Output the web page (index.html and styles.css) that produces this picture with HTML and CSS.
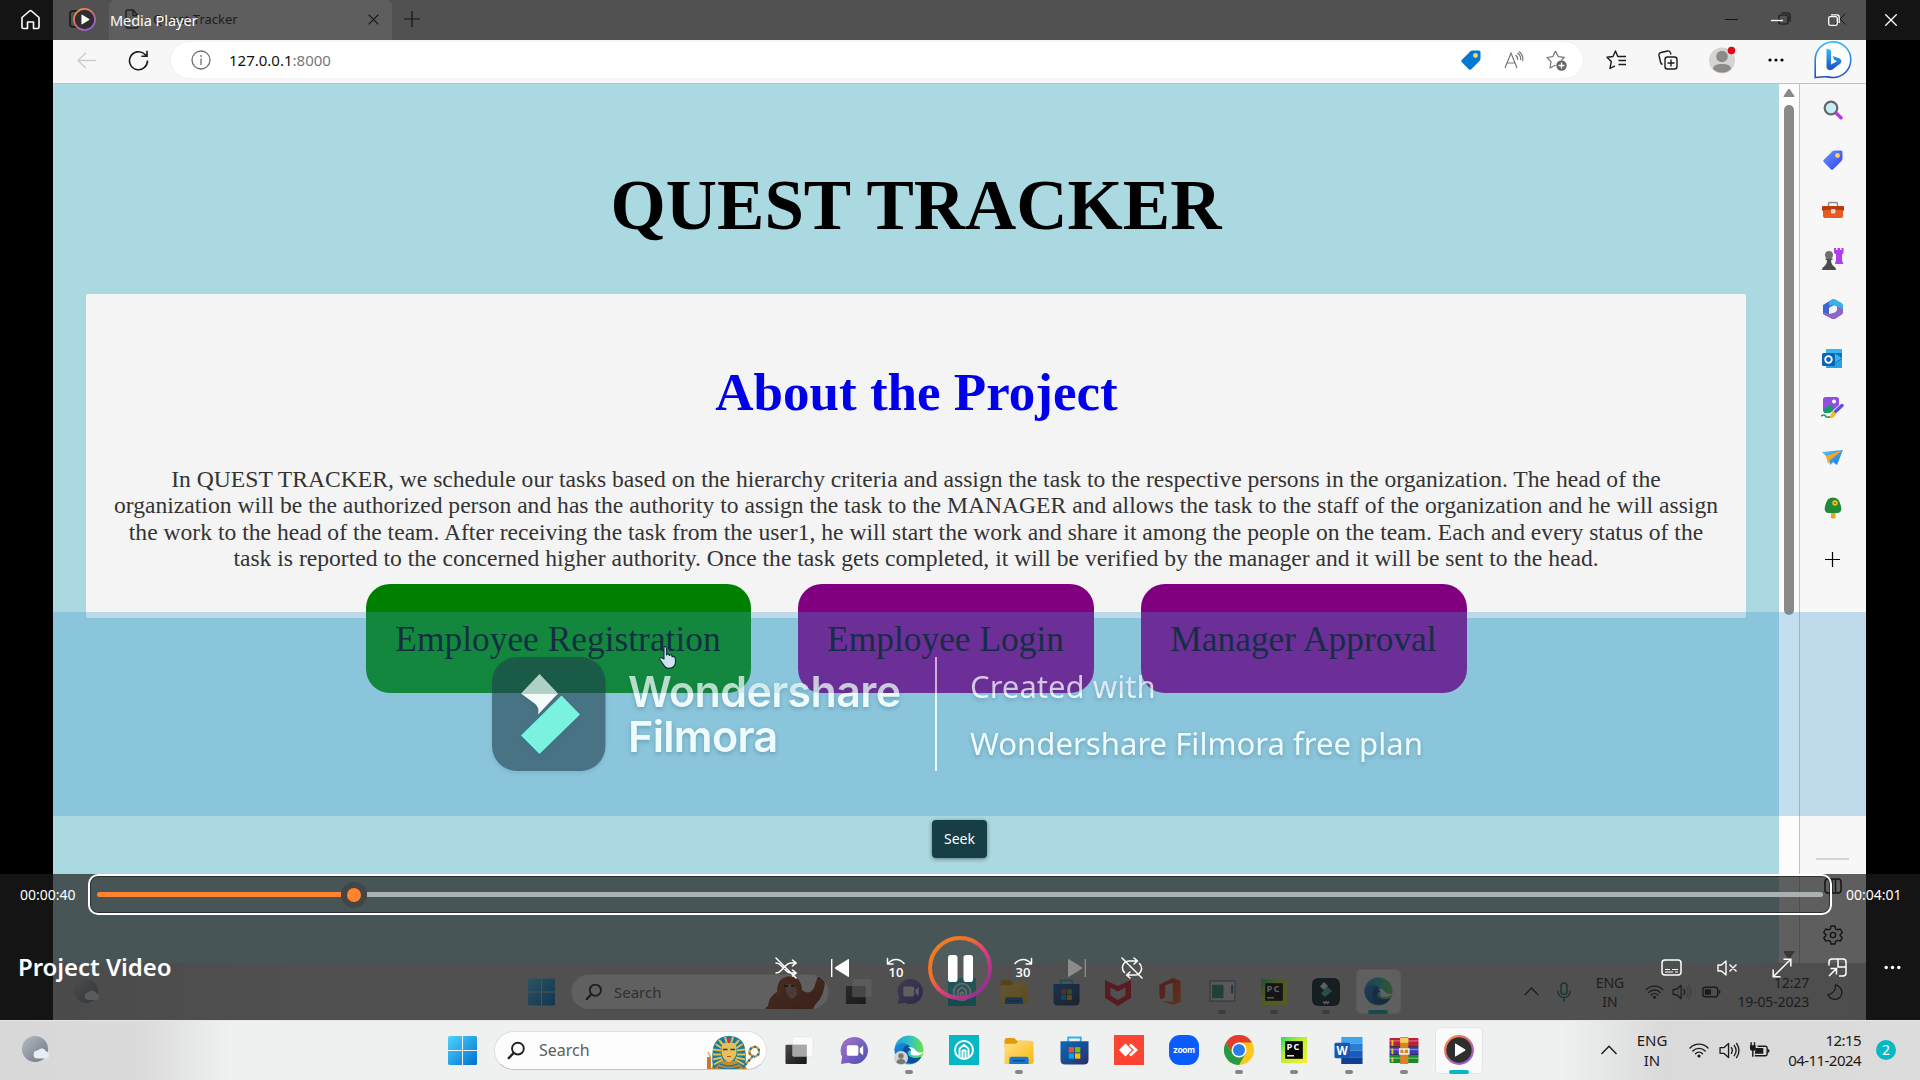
FILE: index.html
```html
<!DOCTYPE html>
<html lang="en">
<head>
<meta charset="utf-8">
<title>Media Player</title>
<link rel="stylesheet" href="styles.css">
</head>
<body>
<svg class="defs" width="0" height="0" aria-hidden="true">
  <defs>
    <linearGradient id="gWin" x1="0" y1="0" x2="1" y2="1"><stop offset="0" stop-color="#4fd4ff"/><stop offset="1" stop-color="#0070d0"/></linearGradient>
    <linearGradient id="gMoon" x1="0" y1="0" x2="1" y2="1"><stop offset="0" stop-color="#b4bcc6"/><stop offset="1" stop-color="#6d747e"/></linearGradient>
    <linearGradient id="gRing" x1="0" y1="0" x2="1" y2="1"><stop offset="0" stop-color="#f58220"/><stop offset=".35" stop-color="#f07028"/><stop offset=".55" stop-color="#d8407c"/><stop offset="1" stop-color="#7a2a98"/></linearGradient>
    <linearGradient id="gMp" x1="0" y1="0" x2=".7" y2="1"><stop offset="0" stop-color="#ff9040"/><stop offset=".5" stop-color="#d86a78"/><stop offset="1" stop-color="#8f5fd8"/></linearGradient>
    <linearGradient id="gChat" x1="0" y1="0" x2="1" y2="1"><stop offset="0" stop-color="#a878c8"/><stop offset="1" stop-color="#4a4cb8"/></linearGradient>
    <linearGradient id="gEdge" x1="0" y1="0" x2="1" y2="0"><stop offset="0" stop-color="#1b9de0"/><stop offset=".5" stop-color="#2fc0c8"/><stop offset="1" stop-color="#6be04c"/></linearGradient>
    <linearGradient id="gEdge2" x1="0" y1="0" x2="1" y2="1"><stop offset="0" stop-color="#1a8fe0"/><stop offset="1" stop-color="#0c4a94"/></linearGradient>
    <linearGradient id="gFold" x1="0" y1="0" x2="1" y2="1"><stop offset="0" stop-color="#ffe08a"/><stop offset="1" stop-color="#fbb90c"/></linearGradient>
    <linearGradient id="gStore" x1="0" y1="0" x2="1" y2="1"><stop offset="0" stop-color="#0a6ab8"/><stop offset="1" stop-color="#2a2f6a"/></linearGradient>
    <linearGradient id="gTv" x1="0" y1="0" x2="1" y2="1"><stop offset="0" stop-color="#4a4a4a"/><stop offset="1" stop-color="#141414"/></linearGradient>
    <linearGradient id="gPc" x1="0" y1="0" x2="1" y2="1"><stop offset="0" stop-color="#1edc6c"/><stop offset=".4" stop-color="#b8ee30"/><stop offset="1" stop-color="#f4f032"/></linearGradient>
    <linearGradient id="gBing" x1="0" y1="0" x2="0" y2="1"><stop offset="0" stop-color="#37bdf0"/><stop offset="1" stop-color="#1b4fc4"/></linearGradient>
    <linearGradient id="gTag" x1="0" y1="0" x2="1" y2="1"><stop offset="0" stop-color="#5c9cff"/><stop offset="1" stop-color="#3b3bee"/></linearGradient>
    <linearGradient id="gPlane" x1="0" y1="0" x2="1" y2="1"><stop offset="0" stop-color="#5cc4f4"/><stop offset="1" stop-color="#1c78d4"/></linearGradient>
    <linearGradient id="gOrang" x1="0" y1="0" x2="1" y2="1"><stop offset="0" stop-color="#b0502a"/><stop offset="1" stop-color="#7c2c14"/></linearGradient>
    <linearGradient id="gOff" x1="0" y1="0" x2="1" y2="1"><stop offset="0" stop-color="#c81e1e"/><stop offset="1" stop-color="#ff6a1c"/></linearGradient>

    <symbol id="win" viewBox="0 0 28 28"><path fill="url(#gWin)" d="M1.500 0H13.500V13.500H0V1.500Q0 0 1.500 0ZM14.500 0H26.500Q28 0 28 1.500V13.500H14.500ZM0 14.500H13.500V28H1.500Q0 28 0 26.500ZM14.500 14.500H28V26.500Q28 28 26.500 28H14.500Z"/></symbol>
    <symbol id="weather" viewBox="0 0 28 28"><circle cx="13" cy="13" r="13" fill="url(#gMoon)"/><path fill="#e8edf3" d="M15.500 22.500a4 4 0 0 1 .2-8 5 5 0 0 1 8.500 1 3.600 3.600 0 0 1 .3 7Z"/></symbol>
    <symbol id="search" viewBox="0 0 20 20"><circle cx="11.500" cy="8" r="6.200" fill="none" stroke="#222" stroke-width="2"/><path d="M7 12.500 1.800 18" stroke="#222" stroke-width="2.400" stroke-linecap="round"/></symbol>
    <symbol id="taskview" viewBox="0 0 30 30"><rect x="1" y="9" width="22" height="20" rx="1" fill="url(#gTv)"/><rect x="8.500" y="1" width="21" height="20" rx="1" fill="#fff" opacity=".7" stroke="#ddd" stroke-width=".6"/><rect x="8.500" y="9" width="14.500" height="12" fill="#a8a8a8"/></symbol>
    <symbol id="chat" viewBox="0 0 30 30"><path fill="url(#gChat)" d="M15 1a14 14 0 1 1-6 26.700L1 29l1.200-7.500A14 14 0 0 1 15 1Z"/><rect x="7" y="9.500" width="12" height="11" rx="2" fill="#fff"/><path fill="#fff" d="m20.500 13 3.500-3v10l-3.500-3Z"/></symbol>
    <symbol id="edge" viewBox="0 0 30 30"><circle cx="15" cy="15" r="14.500" fill="url(#gEdge)"/><path fill="url(#gEdge2)" d="M.5 15C.8 9 8 7 12.500 9c4 1.800 5.500 4.300 4.500 7-1-1-3.500-.4-3.500 2 0 4 6.500 6.500 13.500 4C22 31 3 32.500.5 15Z"/><path fill="#0c4f9c" d="M13 10c-7 4-6 15 3 18.500 5 .5 9-2.500 11-6.500-6 3-13.500 0-13.500-4 0-2 1.500-3.500 3-3 .5-2-1-4-3.500-5Z"/><path fill="#fff" d="M14 12.500c2.500.5 3.700 2.500 2.700 4.500-1 1.800.8 3.600 4.700 3.600 3.500 0 6.500-.8 8-3.600-3 1.200-6 .5-7.500-1.500-2-3-5-4-7.900-3Z"/></symbol>
    <symbol id="user" viewBox="0 0 14 14"><circle cx="7" cy="7" r="7" fill="#d4d4d4"/><circle cx="7" cy="5" r="2.700" fill="#777"/><path fill="#777" d="M2.500 11.500a4.500 3.600 0 0 1 9 0 7 7 0 0 1-9 0Z"/></symbol>
    <symbol id="teal" viewBox="0 0 30 30"><rect width="30" height="30" fill="#06b8c4"/><circle cx="15" cy="15" r="9" fill="none" stroke="#fff" stroke-width="2"/><path fill="none" stroke="#fff" stroke-width="2" d="M10.500 22v-7.500q0-1 1-1.800L15 10l3.500 2.700q1 .8 1 1.800V22M13.500 23v-7q1.500-1.500 3 0v7"/></symbol>
    <symbol id="folder" viewBox="0 0 30 30"><path fill="#e09a0c" d="M0 5q0-3 2.500-3H10l3 3h10v7H0Z"/><path fill="url(#gFold)" d="M0 8h12l3-3h13q2 0 2 2v20q0 2-2 2H0Z"/><path fill="#1478d0" d="M5 29v-5q0-2.500 2.500-2.500h15q2.500 0 2.500 2.500v5Z"/><path d="M9 25.500h12" stroke="#0a4c94" stroke-width="1.500"/></symbol>
    <symbol id="store" viewBox="0 0 30 30"><path fill="none" stroke="#30b4f0" stroke-width="2" d="M8.500 7V2h13v5"/><path fill="url(#gStore)" d="M.5 6h29v19q0 5-5 5h-19q-5 0-5-5Z"/><path fill="#f25022" d="M9 12h5.500v5.500H9Z"/><path fill="#7fba00" d="M15.500 12H21v5.500h-5.500Z"/><path fill="#00a4ef" d="M9 18.500h5.500V24H9Z"/><path fill="#ffb900" d="M15.500 18.500H21V24h-5.500Z"/></symbol>
    <symbol id="anydesk" viewBox="0 0 30 30"><rect width="30" height="30" fill="#fb4434"/><path fill="#fff" d="m11.500 8.500 6.500 6.500-6.500 6.500L5 15Z"/><path fill="none" stroke="#fff" stroke-width="2.800" d="m16 9.500 6 5.500-6 5.500"/></symbol>
    <symbol id="zoomapp" viewBox="0 0 30 30"><rect width="30" height="30" rx="11" fill="#0b5cff"/><text x="15" y="17.800" text-anchor="middle" font-family="Inter, sans-serif" font-weight="700" font-size="8.500" fill="#fff" textLength="22">zoom</text></symbol>
    <symbol id="chrome" viewBox="0 0 30 30"><circle cx="15" cy="15" r="15" fill="#ffc61c"/><path fill="#e33b2e" d="M2 7.500A15 15 0 0 1 28 7.500H15L8.500 18.800Z"/><path fill="#259b45" d="M2 7.500A15 15 0 0 0 15 30l6.500-11.200L8.500 18.800Z"/><circle cx="15" cy="15" r="7.500" fill="#fff"/><circle cx="15" cy="15" r="6" fill="#2b7be9"/></symbol>
    <symbol id="pycharm" viewBox="0 0 28 28"><rect width="28" height="28" fill="url(#gPc)"/><rect x="4.500" y="4.500" width="19" height="19" fill="#050505"/><text x="5.800" y="14" font-family="Open Sans, sans-serif" font-weight="700" font-size="10" fill="#fff" textLength="14">PC</text><path fill="#fff" d="M6.500 19.500h7.500v1.500H6.500Z"/></symbol>
    <symbol id="word" viewBox="0 0 30 30"><path fill="#41a5ee" d="M7 1h22v7H7Z"/><path fill="#2b7cd3" d="M7 8h22v7H7Z"/><path fill="#185abd" d="M7 15h22v7H7Z"/><path fill="#103f91" d="M7 22h22v7H7Z"/><rect y="7" width="16" height="16" rx="1.500" fill="#1657b8"/><text x="8" y="19.300" text-anchor="middle" font-family="Open Sans, sans-serif" font-weight="700" font-size="12" fill="#fff">W</text></symbol>
    <symbol id="winrar" viewBox="0 0 30 28"><rect y="1" width="30" height="9" rx="1" fill="#c01c3c"/><rect y="10" width="30" height="9" fill="#3c3cb0"/><rect y="19" width="30" height="8" rx="1" fill="#168a2c"/><path stroke="#fff" stroke-opacity=".35" stroke-width="1.500" d="M0 4h30M0 13h30M0 22h30"/><path stroke="#222" stroke-width=".8" d="M0 10h30M0 18.500h30"/><path fill="#f0c020" d="M2 3h2v6H2ZM2 12h2v6H2ZM2 21h2v5H2Z"/><rect x="11" width="8.500" height="28" fill="#d88420"/><path fill="#f4d060" d="M11 1h8.500v5H11Z"/><path fill="none" stroke="#eee" stroke-width="1.600" d="M10.500 12.500h9.500v5h-9.500ZM15 12v4"/></symbol>
    <symbol id="mplayer" viewBox="0 0 30 30"><circle cx="15" cy="15" r="13.800" fill="#2e2e2e" stroke="url(#gMp)" stroke-width="2.300"/><path fill="#fff" d="M11.500 8.500 21 14.300q1 .7 0 1.400L11.500 21.500Q11 21.500 11 21V9q0-.7.500-.5Z"/></symbol>
    <symbol id="mcafee" viewBox="0 0 26 28"><path fill="#e01c30" d="M0 2 13 8 26 2V20L13 28 0 20ZM5.500 9.500v8L13 22l7.500-4.500v-8L13 13.500Z"/></symbol>
    <symbol id="office" viewBox="0 0 22 28"><path fill="url(#gOff)" d="M0 7 14 0l8 3v22l-8 3-11-4 11 1V5L6 7.500V20l-4 2q-2 0-2-4Z"/></symbol>
    <symbol id="window" viewBox="0 0 28 24"><rect x="1" y="1" width="26" height="21" fill="#e8e8e8" stroke="#889" stroke-width="1.500"/><path fill="#2e8c84" d="M3 5h12v14H3Z"/><path fill="#2870a0" d="M23 5h2v9h-2Z"/></symbol>
    <symbol id="filmora" viewBox="0 0 28 28"><rect width="28" height="28" rx="6" fill="#0c2430"/><path fill="#fff" d="m12 4 4 4-4 4-4-3.500Z"/><path fill="#40c8b0" d="m15 8.500 5 4.500-7 6-4-3.500Z"/><path fill="none" stroke="#fff" stroke-width="1.300" d="m11 23.500 1.500 2 1.500-2 1.500 2 1.500-2"/></symbol>
    <symbol id="orang" viewBox="0 0 60 33"><path fill="url(#gOrang)" d="M0 33Q1 31 3 30 4 20 12 16 12 5 18 2 26-2 33 3 37 8 37 14 44 20 49 12L53 0 60 3Q60 20 50 29L48 33Z"/><path fill="#b88878" d="M21 9q6-3 9 2 4 4 1 9-4 5-7 1-4-5-3-12Z"/><path d="M19 10h4M26 10h3" stroke="#311" stroke-width="2"/></symbol>
    <symbol id="pharaoh" viewBox="0 0 53 34"><path fill="#c98a2c" d="M4 34 8 25h28l4 9Z"/><path fill="#177ca0" d="M7 34Q4 28 6 13 9 1 22 1T38 13Q40 28 37 34L29 26H15Z"/><path fill="none" stroke="#e8bf48" stroke-width="2" d="M12 5l5 6M8.500 9l6 4M6 14.500l8 1M6 19.500h8M6 24.500l9-2M7 29.500l9-5M32 5l-5 6M35.500 9l-6 4M38 14.500l-8 1M38 19.500h-8M38 24.500l-9-2M37 29.500l-9-5M18 2l1.500 5M26 2l-1.500 5"/><path fill="#e8bf58" d="M14.500 13q0-6 7.500-6t7.500 6v5q-1 7-7.500 9-6.500-2-7.500-9Z"/><path stroke="#15404c" stroke-width="1.600" d="M16 14.500h4.500M23.500 14.500H28"/><path stroke="#a05c20" d="M20 21.500h4"/><path fill="#d33" d="M21 3h2v5h-2Z"/><path fill="none" stroke="#177ca0" stroke-width="1.500" d="M13 29q9 4 18 0M11 32q11 4 22 0"/><path fill="none" stroke="#d89830" stroke-width="2.300" d="M38 30l8-9q-5-2-3-6 2-4 6-3 4 2 3 6-1 3-5 4"/><path fill="none" stroke="#177ca0" stroke-width="2.300" stroke-dasharray="2 3" d="M38 30l8-9q-5-2-3-6 2-4 6-3 4 2 3 6-1 3-5 4"/><path fill="#c87830" d="M0 22h4v12H0Z"/><path fill="none" stroke="#d8a850" stroke-width="1.500" d="M1 17l3 6"/></symbol>

    <symbol id="chev" viewBox="0 0 18 12"><path fill="none" stroke="#1a1a1a" stroke-width="1.400" d="m1.500 10 7.500-7.800 7.500 7.800"/></symbol>
    <symbol id="wifi" viewBox="0 0 20 16"><g fill="none" stroke="#1a1a1a" stroke-width="1.400" stroke-linecap="round"><path d="M1 6a12.500 12.500 0 0 1 18 0M3.800 9a8.700 8.700 0 0 1 12.400 0M6.500 11.700a5 5 0 0 1 7 0"/></g><circle cx="10" cy="14" r="1.600" fill="#1a1a1a"/></symbol>
    <symbol id="spk" viewBox="0 0 22 18"><g fill="none" stroke="#1a1a1a" stroke-width="1.400" stroke-linejoin="round" stroke-linecap="round"><path d="M1 6h4l5-4.500v15L5 12H1ZM13 6q2 3 0 6M16 3.500q4 5.500 0 11M18.500 1.500q5 7.500 0 15"/></g></symbol>
    <symbol id="spklow" viewBox="0 0 22 18"><g fill="none" stroke="#1a1a1a" stroke-width="1.400" stroke-linejoin="round" stroke-linecap="round"><path d="M1 6h4l5-4.500v15L5 12H1ZM13 6q2 3 0 6"/><path opacity=".3" d="M16 3.500q4 5.500 0 11M18.500 1.500q5 7.500 0 15"/></g></symbol>
    <symbol id="batt" viewBox="0 0 20 12"><rect x="1" y="1" width="15.500" height="10" rx="2.500" fill="none" stroke="#1a1a1a" stroke-width="1.500"/><path fill="#1a1a1a" d="M3 3h6.500v6H3ZM17.500 4q2 .3 2 2t-2 2Z"/></symbol>
    <symbol id="plugbatt" viewBox="0 0 22 16"><path fill="none" stroke="#1a1a1a" stroke-width="1.500" d="M9 4h8.500Q19 4 19 6v6q0 2-1.500 2H6M4 8v7"/><path fill="#1a1a1a" d="M7 6h8v6H6ZM19.500 7q2 .3 2 2t-2 2ZM1.500 0v3H1v3q0 3 3 3t3-3V3h-.5V0H5v3H3V0Z"/></symbol>
    <symbol id="mic" viewBox="0 0 14 20"><g fill="none" stroke="#0f7070" stroke-width="1.500" stroke-linecap="round"><rect x="4" y="1" width="6" height="11.500" rx="3"/><path d="M1 9.500a6 6 0 0 0 12 0M7 15.500V19"/></g></symbol>
    <symbol id="crescent" viewBox="0 0 18 18"><path fill="none" stroke="#1a1a1a" stroke-width="1.400" stroke-linejoin="round" d="M10 1.200q1 8.300-8 10.800 3 5 8 4.800 6.500-.8 6.800-7.500Q16.500 3.500 10 1.200Z"/></symbol>
  </defs>
</svg>

<main class="screen">
  <section class="stage">
    <div class="video">
      <div class="tabstrip">
        <span class="tab-actions"><i></i></span>
        <div class="tab">
          <svg width="14" height="20" viewBox="0 0 14 20" fill="none" stroke="#2c2c2c" stroke-width="1.500"><path d="M1 3q0-2 2-2h5l5 5.500V17q0 2-2 2H3q-2 0-2-2ZM8 1v5.500h5"/></svg>
          <span class="tab-title">Quest Tracker</span>
          <svg width="11" height="11" viewBox="0 0 11 11" stroke="#000" stroke-width="1.200"><path d="m.7.700 9.600 9.600m0-9.600L.7 10.300"/></svg>
        </div>
        <span class="newtab"><svg width="16" height="16" viewBox="0 0 16 16" stroke="#000" stroke-width="1.200"><path d="M8 0v16M0 8h16"/></svg></span>
        <span class="wc wc-min"><svg width="13" height="12" viewBox="0 0 13 12" stroke="#000"><path d="M0 6.500h13"/></svg></span>
        <span class="wc wc-max"><svg width="13" height="13" viewBox="0 0 13 13" fill="none" stroke="#000" stroke-width="1.200"><rect x="1" y="3" width="9" height="9" rx="1.500"/><path d="M3.500 1h6.500q2 0 2 2v6.500"/></svg></span>
        <span class="wc wc-close"><svg width="12" height="12" viewBox="0 0 12 12" stroke="#000"><path d="m.5.500 11 11m0-11-11 11"/></svg></span>
      </div>

      <div class="toolbar">
        <span class="t-back"><svg width="19" height="17" viewBox="0 0 19 17" fill="none" stroke="#ccc" stroke-width="1.300"><path d="M19 8.500H1M9 .7 1 8.500l8 7.800"/></svg></span>
        <span class="t-reload"><svg width="21" height="21" viewBox="0 0 21 21" fill="none" stroke="#1b1b1b" stroke-width="1.600"><path d="M19.500 10.500A9 9 0 1 1 16.500 4l2 1.800M19 .8v5.400h-5.600"/></svg></span>
        <div class="address">
          <span class="a-info"><svg width="20" height="20" viewBox="0 0 20 20" fill="none" stroke="#707070" stroke-width="1.300"><circle cx="10" cy="10" r="9"/><path d="M10 8.500V15M10 5v2"/></svg></span>
          <span class="url"><b>127.0.0.1</b>:8000</span>
          <span class="a-tag"><svg width="20" height="20" viewBox="0 0 20 20"><path fill="#0078d4" d="M9.500 1.200 11 .5h7q1.500 0 1.500 1.500v7l-1 2-8.500 8.500q-1 .7-2 0L.7 12q-.8-1 0-2Z"/><circle cx="14.500" cy="5.500" r="2.400" fill="#fcd35a"/></svg></span>
          <span class="a-read"><svg width="20" height="18" viewBox="0 0 20 18" fill="none" stroke="#767676" stroke-width="1.200"><path d="M1 17 7 2l6 15M3 12h8M11.500 4q2.500 2 2 5M13.500 2q4 3 3 7M15 .5q5 4 3.500 9.500"/></svg></span>
          <span class="a-star"><svg width="21" height="21" viewBox="0 0 21 21"><path fill="none" stroke="#767676" stroke-width="1.200" stroke-linejoin="round" d="m9.500 1 2.700 5.600 6.200.8L15.500 10M9.500 15l-5.500 3 1-6.300L1 7.500l5.900-.9L9.500 1"/><circle cx="15.500" cy="15.500" r="5.200" fill="#666"/><path stroke="#fff" stroke-width="1.300" d="M15.500 12.500v6m-3-3h6"/></svg></span>
        </div>
        <span class="t-fav"><svg width="20" height="20" viewBox="0 0 20 20" fill="none" stroke="#1b1b1b" stroke-width="1.400" stroke-linejoin="round"><path d="M13 6.500h-1.200L9.500 1 7 6.500 1 7.200l4.300 4.300L4 18.500l5-2.700M12.500 6.500H20M12.500 10.500H20M12.500 14.500H20"/></svg></span>
        <span class="t-coll"><svg width="20" height="20" viewBox="0 0 20 20" fill="none" stroke="#1b1b1b" stroke-width="1.400"><rect x="7" y="7" width="12" height="12" rx="2.500"/><path d="M13 9.500v7M9.500 13h7M4.500 14.500Q3 14 2.500 12L1 5.500Q.5 3 3 2.500L9.500 1q2.500-.5 3 2l.5 1.500"/></svg></span>
        <span class="t-user"><svg width="28" height="28" viewBox="0 0 28 28"><circle cx="14" cy="14.500" r="13" fill="#d4d4d4"/><circle cx="14" cy="10.500" r="5.800" fill="#8e8a88"/><path fill="#8e8a88" d="M5 23q0-5 9-5t9 5a13 13 0 0 1-18 0Z"/><circle cx="23.500" cy="4.500" r="3.800" fill="#dd0a14"/></svg></span>
        <span class="t-more"><svg width="16" height="4" viewBox="0 0 16 4"><circle cx="2" cy="2" r="1.600"/><circle cx="8" cy="2" r="1.600"/><circle cx="14" cy="2" r="1.600"/></svg></span>
        <span class="t-bing"><svg width="38" height="38" viewBox="0 0 38 38"><path fill="#fff" stroke="url(#gBing)" stroke-width="1.600" d="M1.200 36.500V19a17.800 17.800 0 1 1 17.800 17.500q-2 0-5-.6-4-.4-12.800.6Z"/><path fill="url(#gBing)" d="m12.500 7.500 4.500 1.700v14.300l6-3.200-2.800-1.500-1.600-3.800 6.900 2.300q2.800 1.800 1.200 5L18.500 28.500q-4.500 2-6-2Z"/></svg></span>
      </div>

      <div class="browser">
        <div class="page">
          <h1>QUEST TRACKER</h1>
          <div class="card">
            <h2>About the Project</h2>
            <p>In QUEST TRACKER, we schedule our tasks based on the hierarchy criteria and assign the task to the respective persons in the organization. The head of the<br>organization will be the authorized person and has the authority to assign the task to the MANAGER and allows the task to the staff of the organization and he will assign<br>the work to the head of the team. After receiving the task from the user1, he will start the work and share it among the people on the team. Each and every status of the<br>task is reported to the concerned higher authority. Once the task gets completed, it will be verified by the manager and it will be sent to the head.</p>
          </div>
          <nav class="actions">
            <a class="btn btn-reg">Employee Registration</a>
            <a class="btn btn-login">Employee Login</a>
            <a class="btn btn-appr">Manager Approval</a>
          </nav>
        </div>
        <div class="scroll">
          <svg width="12" height="10" viewBox="0 0 12 10"><path fill="#888" d="M1 9Q0 9 1 7.500L5 1.500q1-1.500 2 0l4 6Q12 9 11 9Z"/></svg>
          <i class="thumb"></i>
          <svg class="down" width="12" height="10" viewBox="0 0 12 10"><path fill="#777" d="M1 1h10q1 0 0 1.500L7 8.500q-1 1.500-2 0l-4-6Q0 1 1 1Z"/></svg>
        </div>
        <aside class="side">
          <svg width="20" height="20" viewBox="0 0 20 20"><circle cx="8" cy="8" r="6.300" fill="#c6ecfa" stroke="#666" stroke-width="2.200"/><path d="m13.500 13.500 4.500 4.300" stroke="#bb35e8" stroke-width="3.400" stroke-linecap="round"/></svg>
          <svg width="20" height="20" viewBox="0 0 20 20"><path fill="url(#gTag)" d="M9.500 1.200 11 .5h7q1.500 0 1.500 1.500v7l-1 2-8.500 8.500q-1 .7-2 0L.7 12q-.8-1 0-2Z"/><circle cx="14.500" cy="5.500" r="2.400" fill="#fcd35a"/></svg>
          <svg width="22" height="18" viewBox="0 0 22 18"><path fill="none" stroke="#8a9094" stroke-width="1.500" d="M6.500 6V3q0-1.500 1.500-1.500h6q1.500 0 1.500 1.500v3"/><rect y="5" width="22" height="5" rx="1" fill="#b83c10"/><path fill="#e85a20" d="M1 9h20v6q0 2-2 2H3q-2 0-2-2Z"/><rect x="9" y="8" width="4.500" height="4.500" rx="1" fill="#dcdcdc"/></svg>
          <svg width="22" height="22" viewBox="0 0 22 22"><path fill="#b13cf0" d="M12 0h2v2h1.500V0h2.500v2h1.500V0h2v5l-1.500 1.500v6l1.500 3.500H13l1-4V6.500L12 5Z"/><circle cx="7" cy="7" r="4" fill="#707070"/><path fill="#4c4c4c" d="M3.500 10.500h7V12H9q0 4 3 6.500 2 .5 2 3.500H0q0-3 2-3.500Q5 16 5 12H3.500Z"/></svg>
          <svg width="20" height="20" viewBox="0 0 20 20"><path fill="#3f66d0" d="M10 0 0 6v9l6 3V9l5-3 9 4V6.500Z"/><path fill="#38b0e8" d="m9 .5 3-.2 7 4q1 1 1 3V11l-6-3.500L10 5.500 6 7V3Z"/><path fill="#8e66c8" d="M20 10v4l-1 1.500L12 20h-3L1 15.500 0 13l6 2 4-1 4-2.500V7Z"/><circle cx="10" cy="10.500" r="3.300" fill="#f4f4ff"/></svg>
          <svg width="21" height="20" viewBox="0 0 21 20"><rect x="4" width="16" height="19" rx="1" fill="#35b5ec"/><path fill="#146cbc" d="M12 4h8v15H4l16-10Z"/><path fill="#28a0e8" d="m4 19 16-9v9Z"/><rect y="4" width="13" height="13" rx="1.500" fill="#0a64b4"/><circle cx="6.500" cy="10.500" r="3.300" fill="none" stroke="#fff" stroke-width="1.800"/></svg>
          <svg width="23" height="22" viewBox="0 0 23 22"><rect x="2" width="16" height="15" rx="2.500" fill="#8f50e0"/><circle cx="13" cy="4.500" r="2" fill="#fff"/><path fill="#1b9a68" d="m2 13 6-5 6 4-4 4H3Z"/><path stroke="#f7f7f7" stroke-width="5.500" d="m11 18 11-10"/><path stroke="#5a50e4" stroke-width="3.400" stroke-linecap="round" d="m13.500 15.500 7.500-7"/><path fill="#f8b820" d="m12 13.500 3 3q-1 5-7 4.500Z"/><path fill="none" stroke="#1b9a68" stroke-width="1.600" d="M0 19q3-2 4.500 0t4.500.7"/></svg>
          <svg width="21" height="16" viewBox="0 0 21 16"><path fill="url(#gPlane)" d="M0 2 21 0l-6 15-4-3-3 3-1-6Z"/><path fill="#f5a623" d="M21 0 4 6l2 8 2-4Z"/></svg>
          <svg width="18" height="22" viewBox="0 0 18 22"><rect x="7" y="13" width="4.500" height="8.500" rx="1" fill="#f0a41c"/><path fill="#1f8a38" d="M9 .5q6 0 7.500 7Q19 15 14 16H4q-5-1-2.500-8.500Q3 .5 9 .5Z"/><circle cx="11" cy="6" r="2.700" fill="#f8c11c"/><circle cx="11" cy="6" r="1" fill="#c04410"/></svg>
          <svg class="side-add" width="15" height="15" viewBox="0 0 15 15" stroke="#000" stroke-width="1.200"><path d="M7.500 0v15M0 7.500h15"/></svg>
          <i class="side-rule"></i>
          <svg class="side-panel" width="18" height="16" viewBox="0 0 18 16" fill="none" stroke="#000" stroke-width="1.500"><rect x="1" y="1" width="16" height="14" rx="3"/><path d="M8 1v14M11.500 1v14"/></svg>
          <svg class="side-gear" width="20" height="20" viewBox="0 0 20 20" fill="none" stroke="#000" stroke-width="1.400" stroke-linejoin="round"><path d="M8 1h4l.6 2.800 2 1.100L17.300 4l2 3.500L17.200 9.500v1.200l2.100 2-2 3.400-2.700-.8-2 1.100L12 19H8l-.6-2.600-2-1.100-2.700.8-2-3.400 2.100-2V9.500L.7 7.500l2-3.500 2.700.9 2-1.100Z"/><circle cx="10" cy="10" r="2.600"/></svg>
        </aside>
      </div>

      <div class="inner-taskbar">
        <span class="weather"><svg width="26" height="26"><use href="#weather"/></svg></span>
        <span class="start"><svg width="27" height="28"><use href="#win"/></svg></span>
        <div class="pill"><svg class="mag" width="18" height="18"><use href="#search"/></svg><span>Search</span><svg class="art" width="60" height="33"><use href="#orang"/></svg></div>
        <div class="apps">
          <span><svg width="27" height="27"><use href="#taskview"/></svg></span>
          <span><svg width="27" height="27"><use href="#chat"/></svg></span>
          <span><svg width="28" height="28"><use href="#teal"/></svg></span>
          <span><svg width="28" height="27"><use href="#folder"/></svg></span>
          <span><svg width="27" height="28"><use href="#store"/></svg></span>
          <span><svg width="26" height="28"><use href="#mcafee"/></svg></span>
          <span><svg width="22" height="27"><use href="#office"/></svg></span>
          <span class="run"><svg width="27" height="23"><use href="#window"/></svg></span>
          <span class="run"><svg width="26" height="26"><use href="#pycharm"/></svg></span>
          <span class="run"><svg width="28" height="28"><use href="#filmora"/></svg></span>
          <span class="active"><svg width="29" height="29"><use href="#edge"/></svg></span>
        </div>
        <div class="tray">
          <span class="v-chev"><svg width="17" height="11"><use href="#chev"/></svg></span>
          <span class="v-mic"><svg width="14" height="20"><use href="#mic"/></svg></span>
          <span class="v-lang">ENG<br>IN</span>
          <span class="v-wifi"><svg width="19" height="15"><use href="#wifi"/></svg></span>
          <span class="v-spk"><svg width="20" height="16"><use href="#spklow"/></svg></span>
          <span class="v-batt"><svg width="19" height="12"><use href="#batt"/></svg></span>
          <span class="v-clock">12:27<br>19-05-2023</span>
          <span class="v-focus"><svg width="17" height="18"><use href="#crescent"/></svg></span>
        </div>
      </div>

      <div class="band"></div>
      <svg class="hand" width="18" height="23" viewBox="0 0 18 23"><path fill="#cfe2ee" stroke="#0d2c3c" stroke-width="1.100" stroke-linejoin="round" d="M5 13V2.200Q5-.2 6.500.8q1 .3 1 1.500V9q.5-2 2.500-.5l.3 1q1.500-1.500 2.700.3v1q2-1 3 .8 1.500 5.500-1 8.500-1.500 2.300-5 2.300T5.500 20L.8 13.500Q.5 11 3 12Z"/></svg>
      <div class="watermark">
        <svg class="wm-logo" width="114" height="116" viewBox="0 0 114 116"><rect y="1" width="113.500" height="114" rx="25" fill="#1f3f4f" fill-opacity=".57"/><path fill="#e8fff4" fill-opacity=".72" d="M47.500 18 66 37.500H29Z"/><path fill="#fafffd" fill-opacity=".97" d="M29 37.500H66L46 58.500Q48 51 42 47Z"/><path fill="#7af2e0" d="M69.500 39.500 88 58.500 47.500 98 29 79.500Z"/></svg>
        <div class="wm-name"><span class="top">Wondershare</span><span>Filmora</span></div>
        <i class="wm-rule"></i>
        <div class="wm-plan"><span class="top">Created with</span><span>Wondershare Filmora free plan</span></div>
      </div>
    </div>

    <div class="player">
      <header class="p-title">
        <span class="p-home"><svg width="21" height="21" viewBox="0 0 21 21" fill="none" stroke="#fff" stroke-width="1.600" stroke-linejoin="round"><path d="M2 8.500 9.500 2q1-.9 2 0L19 8.500V18q0 1.500-1.500 1.500h-4V13H7.500v6.500h-4Q2 19.500 2 18Z"/></svg></span>
        <span class="p-app"><svg width="23" height="23"><use href="#mplayer"/></svg></span>
        <span class="p-name">Media Player</span>
        <span class="p-win"><svg width="12" height="12" viewBox="0 0 12 12" stroke="#fff" stroke-width="1.300"><path d="M0 6.500h12"/></svg></span>
        <span class="p-win"><svg width="12" height="12" viewBox="0 0 12 12" fill="none" stroke="#fff" stroke-width="1.300"><rect x=".7" y="2.700" width="8.600" height="8.600" rx="1.500"/><path d="M3 .8h6q2.200 0 2.200 2.200v6"/></svg></span>
        <span class="p-win"><svg width="12" height="12" viewBox="0 0 12 12" stroke="#fff" stroke-width="1.300"><path d="m.3.300 11.400 11.400m0-11.400L.3 11.700"/></svg></span>
      </header>
      <span class="tip">Seek</span>
      <footer class="p-bar">
        <div class="p-seek">
          <span class="time t-now">00:00:40</span>
          <div class="slider"><i class="fill"></i><i class="knob"></i><i class="rest"></i></div>
          <span class="time t-end">00:04:01</span>
        </div>
        <div class="p-ctl">
          <span class="p-media">Project Video</span>
          <div class="mid">
            <span><svg width="22" height="22" viewBox="0 0 22 22" fill="none" stroke="#fff" stroke-width="1.500" stroke-linecap="round"><path d="M1 6q3 0 5 2.500l5 5q2 2.500 5 2.500h4M1 16q3 0 5-2.500L11 8.500Q13 6 16 6h4M17.500 3 21 6l-3.500 3M17.500 13l3.500 3-3.500 3M1 1l20 20"/></svg></span>
            <span><svg width="20" height="20" viewBox="0 0 20 20" fill="#fff"><path d="M1 1h1.400v18H1ZM18 1.300q1-.6 1 .7v16q0 1.300-1 .7L5.500 11q-1-1 0-2Z"/></svg></span>
            <span class="jump"><svg width="20" height="9" viewBox="0 0 20 9"><path fill="none" stroke="#fff" stroke-width="1.500" stroke-linecap="round" stroke-linejoin="round" d="M1.500 1.500v5.500H7M2 6.500Q5.500 2.500 10 2.500t8 4"/></svg><b>10</b></span>
            <span><svg width="64" height="68" viewBox="0 0 64 68"><circle cx="32" cy="34" r="30" fill="#fff" fill-opacity=".05" stroke="url(#gRing)" stroke-width="4"/><rect x="20" y="21" width="9.500" height="27" rx="2.800" fill="#fff"/><rect x="35.500" y="21" width="9.500" height="27" rx="2.800" fill="#fff"/></svg></span>
            <span class="jump"><svg width="20" height="9" viewBox="0 0 20 9"><path fill="none" stroke="#fff" stroke-width="1.500" stroke-linecap="round" stroke-linejoin="round" d="M18.500 1.500v5.500H13M18 6.500q-3.500-4-8-4t-8 4"/></svg><b>30</b></span>
            <span><svg width="20" height="20" viewBox="0 0 20 20" fill="#8c8c8c"><path d="M17.600 1H19v18h-1.400ZM2 1.300q-1-.6-1 .7v16q0 1.300 1 .7L14.500 11q1-1 0-2Z"/></svg></span>
            <span><svg width="22" height="22" viewBox="0 0 22 22" fill="none" stroke="#fff" stroke-width="1.500" stroke-linecap="round" stroke-linejoin="round"><path d="M3.500 15.500Q1 13 1.500 9.500 3 4 8 4h7M13 1l3.500 3L13 7M18.500 6.500q2.500 2.500 2 6Q19 18 14 18H7M9 21l-3.500-3L9 15M1 1l20 20"/></svg></span>
          </div>
          <div class="right">
            <span><svg width="21" height="17" viewBox="0 0 21 17" fill="none" stroke="#fff" stroke-width="1.500"><rect x="1" y="1" width="19" height="15" rx="3"/><path d="M4 10.500h5M11 10.500h6M4 13h8M14 13h3" stroke-width="1.200"/></svg></span>
            <span><svg width="20" height="16" viewBox="0 0 20 16" fill="none" stroke="#fff" stroke-width="1.400" stroke-linejoin="round"><path d="M1 5h3.500L9 1v14l-4.500-4H1ZM12.500 4.500l7 7m0-7-7 7"/></svg></span>
            <span><svg width="20" height="20" viewBox="0 0 20 20" fill="none" stroke="#fff" stroke-width="1.500"><path d="M1.500 18.500 18.500 1.500M11.500 1.200h7.300v7.300M1.200 11.500v7.300h7.300"/></svg></span>
            <span><svg width="19" height="19" viewBox="0 0 19 19" fill="none" stroke="#fff" stroke-width="1.500"><path d="M1 7.500V4q0-3 3-3h11q3 0 3 3v11q0 3-3 3h-4M10 1v8h8M1 18l7-7M2.500 10.500h6v6"/></svg></span>
            <span><svg width="17" height="5" viewBox="0 0 17 5" fill="#fff"><circle cx="2.200" cy="2.500" r="1.700"/><circle cx="8.500" cy="2.500" r="1.700"/><circle cx="14.800" cy="2.500" r="1.700"/></svg></span>
          </div>
        </div>
      </footer>
    </div>
  </section>

  <section class="taskbar">
    <span class="weather"><svg width="28" height="28"><use href="#weather"/></svg></span>
    <span class="start"><svg width="29" height="29"><use href="#win"/></svg></span>
    <div class="pill"><svg class="mag" width="19" height="19"><use href="#search"/></svg><span>Search</span><svg class="art" width="53" height="34"><use href="#pharaoh"/></svg></div>
    <div class="apps">
      <span><svg width="30" height="29"><use href="#taskview"/></svg></span>
      <span><svg width="29" height="29"><use href="#chat"/></svg></span>
      <span class="run"><svg width="30" height="30"><use href="#edge"/></svg><svg class="who" width="14" height="14"><use href="#user"/></svg></span>
      <span><svg width="30" height="30"><use href="#teal"/></svg></span>
      <span class="run"><svg width="30" height="29"><use href="#folder"/></svg></span>
      <span><svg width="29" height="30"><use href="#store"/></svg></span>
      <span><svg width="30" height="30"><use href="#anydesk"/></svg></span>
      <span><svg width="30" height="30"><use href="#zoomapp"/></svg></span>
      <span class="run"><svg width="30" height="30"><use href="#chrome"/></svg></span>
      <span class="run"><svg width="26" height="26"><use href="#pycharm"/></svg></span>
      <span class="run"><svg width="30" height="29"><use href="#word"/></svg></span>
      <span class="run"><svg width="30" height="27"><use href="#winrar"/></svg></span>
      <span class="active"><svg width="30" height="30"><use href="#mplayer"/></svg></span>
    </div>
    <div class="tray">
      <span class="s-chev"><svg width="18" height="12"><use href="#chev"/></svg></span>
      <span class="s-lang">ENG<br>IN</span>
      <span class="s-ic"><svg width="20" height="16"><use href="#wifi"/></svg></span>
      <span class="s-ic"><svg width="21" height="17"><use href="#spk"/></svg></span>
      <span class="s-ic"><svg width="21" height="16"><use href="#plugbatt"/></svg></span>
      <span class="s-clock">12:15<br>04-11-2024</span>
      <span class="s-badge"><b>2</b></span>
    </div>
  </section>
</main>
</body>
</html>
```

FILE: styles.css
```css
* { box-sizing: border-box; }
html, body { margin: 0; height: 100%; background: #000; }
body { font-family: "Noto Sans", "Open Sans", sans-serif; overflow: hidden; }
.defs { position: absolute; }
svg { display: block; flex: none; }
i { display: block; }

.screen { display: grid; grid-template-rows: 1020px 60px; width: 1920px; height: 1080px; }
.stage { display: grid; grid-template: 1020px / 1920px; }
.video, .player { grid-area: 1 / 1; }
.video { position: relative; width: 1813px; margin-left: 53px; display: grid; grid-template-rows: 40px 44px 879px 57px; background: #f7f7f7; }

/* browser tab strip */
.tabstrip { display: flex; background: #cbcbcb; }
.tabstrip > span { display: flex; align-items: center; justify-content: center; padding-bottom: 3px; }
.tab-actions { width: 56px; }
.tab-actions i { width: 16px; height: 18px; border: 2px solid #333; border-radius: 4px; margin-left: -8px; }
.tab { width: 283px; background: #f7f7f7; border-radius: 6px 6px 0 0; display: flex; align-items: center; padding: 0 13px 2px 16px; }
.tab svg:last-child { margin-left: auto; }
.tab-title { font-size: 13px; color: #222; margin-left: 14px; }
.newtab { width: 40px; }
.wc-min { width: 46px; margin-left: auto; }
.wc-max { width: 60px; }
.wc-close { width: 52px; }

/* browser toolbar */
.toolbar { display: flex; align-items: center; background: #f7f7f7; border-bottom: 1px solid #b9c4c6; padding-bottom: 3px; }
.toolbar > span, .address > span { display: flex; align-items: center; justify-content: center; flex: none; }
.t-back { width: 66px; }
.t-reload { width: 38px; }
.address { width: 1412px; height: 36px; margin: 0 0 0 14px; border-radius: 18px; background: #fff; display: flex; align-items: center; box-shadow: 0 0 2px #e2e2e2; }
.a-info { width: 60px; }
.address .url { font-size: 15px; color: #777; margin: 0 auto 0 -2px; }
.url b { font-weight: 400; color: #111; }
.a-tag { width: 56px; }
.a-read { width: 30px; }
.a-star { width: 54px; }
.t-fav { width: 66px; }
.t-coll { width: 38px; }
.t-user { width: 70px; }
.t-more { width: 38px; }
.t-bing { width: 71px; padding-left: 5px; }

/* web page */
.browser { display: grid; grid-template-columns: 1726px 20px 67px; min-height: 0; }
.page { background: #abd9e1; font-family: "Liberation Serif", serif; text-align: center; padding: 81px 33px 0; }
.page h1 { margin: 0; font-size: 71px; line-height: 80px; font-weight: 700; color: #000; }
.card { margin-top: 49px; height: 324px; background: #f4f4f4; border-radius: 2px; padding-top: 68px; }
.card h2 { margin: 0 0 44px; padding-left: 1px; font-size: 53px; line-height: 60px; color: #0000ea; white-space: nowrap; }
.card p { margin: 0; font-size: 23.600px; line-height: 26.400px; color: #333; display: grid; justify-content: center; white-space: nowrap; }
.actions { display: flex; justify-content: center; gap: 47px; margin-top: -34px; position: relative; }
.btn { height: 109px; border-radius: 24px; font-size: 35.400px; line-height: 110px; color: #02020a; white-space: nowrap; background: #800080; }
.btn-reg { width: 385px; background: #008000; }
.btn-login { width: 296px; }
.btn-appr { width: 326px; }

.scroll { background: #fcfcfc; display: flex; flex-direction: column; align-items: center; padding-top: 4px; }
.thumb { width: 10px; height: 510px; border-radius: 5px; background: #898989; margin-top: 7px; }
.scroll .down { margin: auto 0 3px; }
.side { background: #f7f7f7; border-left: 1px solid #c2c2c2; padding-right: 1px; display: grid; grid-template-rows: 51px repeat(7, 49.700px) 50px 54px 0 1fr 51px 52px; justify-items: center; align-items: center; }
.side-rule { width: 33px; height: 2px; background: #d4d4d4; grid-row: 12; align-self: end; }
.side-panel { grid-row: 13; }
.side-gear { grid-row: 14; align-self: start; margin-top: 14px; }

/* shared taskbar parts */
.inner-taskbar, .taskbar { display: flex; align-items: center; }
.inner-taskbar > span, .taskbar > span, .apps > span, .tray > span { display: flex; align-items: center; justify-content: center; flex: none; }
.pill { display: flex; align-items: center; background: #fdfdfd; border: 1px solid #e0e0e0; border-bottom-color: #c4c4c4; overflow: hidden; color: #5c5c5c; }
.pill .art { margin-left: auto; align-self: end; }
.apps { display: flex; height: 100%; }
.apps > span { position: relative; height: 100%; }
.run::after, .active::after { content: ""; position: absolute; bottom: 6px; width: 8px; height: 4px; border-radius: 2px; background: #868686; }
.active::after { width: 20px; background: #06b8c4; }
.active::before { content: ""; position: absolute; inset: 6px 3.500px; border-radius: 5px; background: #fafafa; border: 1px solid #e4e4e4; }
.active svg { position: relative; }
.tray { display: flex; margin-left: auto; height: 100%; }
.tray span { text-align: center; }

/* taskbar inside the recording */
.inner-taskbar { background: linear-gradient(90deg, #b8b8b8, #cacaca 15%, #cacaca 85%, #c0c0c0); padding-right: 7px; }
.inner-taskbar .weather { width: 68px; }
.inner-taskbar .start { width: 50px; margin-left: 395px; }
.inner-taskbar .pill { width: 258px; height: 36px; border-radius: 18px; margin-left: 5px; font-size: 15px; padding: 0 3px 0 13px; }
.inner-taskbar .pill span { margin-left: 11px; }
.inner-taskbar .apps { margin-left: 3px; }
.inner-taskbar .apps > span { width: 52px; }
.inner-taskbar .tray { font-size: 14px; line-height: 19px; color: #222; }
.v-chev { width: 34px; }
.v-mic { width: 32px; }
.v-lang { width: 60px; }
.v-wifi, .v-spk { width: 28px; }
.v-batt { width: 30px; }
.tray .v-clock { width: 83px; justify-content: flex-end; text-align: right; letter-spacing: -.150px; }
.v-focus { width: 50px; }

/* highlight band and watermark over the recording */
.band { position: absolute; left: 0; right: 0; top: 612px; height: 204px; background: rgba(64, 152, 206, .3); }
.hand { position: absolute; left: 606px; top: 646px; }
.watermark { position: absolute; left: 439px; top: 656px; display: flex; align-items: flex-start; height: 116px; color: rgba(242, 255, 255, .96); white-space: nowrap; }
.wm-logo { filter: drop-shadow(0 2px 2px rgba(30, 60, 80, .2)); }
.wm-name, .wm-plan { display: flex; flex-direction: column; align-items: flex-start; filter: drop-shadow(0 2px 2px rgba(30, 70, 100, .3)); }
.wm-name { width: 307px; margin-left: 22px; padding-top: 13px; font: 600 43px/45px Inter, sans-serif; letter-spacing: -.650px; }
/* the watermark is fainter where it crosses the dark buttons */
.wm-name .top, .wm-plan .top { color: transparent; -webkit-background-clip: text; background-clip: text; }
.wm-name .top { background-image: linear-gradient(rgba(240, 255, 250, .74) 24px, rgba(242, 255, 255, .96) 24px); }
.wm-plan .top { background-image: linear-gradient(rgba(250, 246, 255, .76) 35px, rgba(242, 255, 255, .92) 35px); }
.wm-rule { width: 2px; height: 114px; margin-top: 1px; background: linear-gradient(rgba(255, 240, 255, .65) 36px, rgba(240, 255, 255, .9) 36px); }
.wm-plan { margin-left: 33px; padding-top: 2px; font-size: 31.100px; line-height: 57px; }

/* player chrome */
.player { position: relative; display: flex; flex-direction: column; color: #fff; }
.p-title { height: 40px; background: rgba(29, 29, 29, .7); display: flex; align-items: center; padding: 0 1px 1px 0; }
.p-title > span { display: flex; align-items: center; justify-content: center; flex: none; }
.p-home { width: 60px; }
.p-app { width: 49px; }
.p-title .p-name { font-size: 14.500px; margin: 1px auto 0 1px; letter-spacing: -.050px; }
.p-win { width: 57px; }
.tip { position: absolute; left: 932px; top: 820px; width: 55px; height: 38px; border-radius: 4px; background: #173d45; font-size: 14px; line-height: 37px; text-align: center; box-shadow: 0 1px 4px rgba(0, 0, 0, .45); }
.p-bar { margin-top: auto; height: 146px; background: rgba(29, 29, 29, .7); }
.p-seek { display: flex; height: 41px; align-items: center; }
.time { font-size: 14px; flex: none; }
.t-now { width: 88px; padding-left: 20px; }
.t-end { padding-left: 14px; }
.slider { width: 1744px; height: 41px; border: 2.500px solid #fff; border-radius: 10px; box-shadow: inset 0 0 0 1px rgba(20, 20, 20, .6); display: flex; align-items: center; padding: 0 7px; }
.fill { width: 244px; height: 5px; border-radius: 3px 0 0 3px; background: #ff8330; }
.knob { width: 26px; height: 26px; border-radius: 50%; border: 6.500px solid #454545; background: #ff8330; flex: none; }
.rest { flex: 1; height: 5px; border-radius: 0 3px 3px 0; background: #a9b1b2; }
.p-ctl { display: grid; grid-template-columns: 759px 404px 1fr 276px; height: 105px; align-items: center; }
.p-media { padding: 0 0 2px 18px; font-size: 24px; font-weight: 600; letter-spacing: -.050px; }
.mid { display: grid; grid-template-columns: 54px 54px 58px 69px 58px 50px 60px; }
.right { grid-column: 4; display: grid; grid-template-columns: repeat(5, 1fr); }
.mid > span, .right > span { display: flex; align-items: center; justify-content: center; }
.mid > .jump { flex-direction: column; }
.jump b { font: 600 13px/13px "Open Sans", sans-serif; }

/* system taskbar */
.taskbar { background: linear-gradient(90deg, #d8d8d8 0, #dadada 140px, #eff1f1 230px, #eff1f1 1560px, #dadada 1660px, #dcdcdc 100%); padding-right: 9px; border-top: 1px solid #e6e6e6; }
.taskbar > span svg, .taskbar .apps > span > svg { margin-top: -1px; }
.taskbar .weather { width: 72px; }
.taskbar .start { width: 56px; margin-left: 362px; }
.taskbar .pill { width: 273px; height: 39px; border-radius: 20px; margin: -1px 0 0 4px; font-size: 16px; padding: 0 6px 0 13px; }
.taskbar .pill .mag { margin-left: -1px; }
.taskbar .pill span { margin-left: 13px; }
.taskbar .apps { margin-left: 4.500px; }
.taskbar .apps > span { width: 55px; }
.apps .who { position: absolute; left: 12px; top: 31px; }
.taskbar .tray { font-size: 15px; line-height: 20px; color: #1a1a1a; padding-bottom: 1px; }
.s-chev { width: 22px; }
.s-lang { width: 64px; }
.s-ic { width: 30px; }
.tray .s-clock { width: 87px; justify-content: flex-end; text-align: right; letter-spacing: -.550px; }
.s-badge { width: 50px; }
.s-badge b { width: 20px; height: 20px; border-radius: 50%; background: #06b8c4; color: #fff; font-weight: 400; font-size: 14px; line-height: 20px; }
```
